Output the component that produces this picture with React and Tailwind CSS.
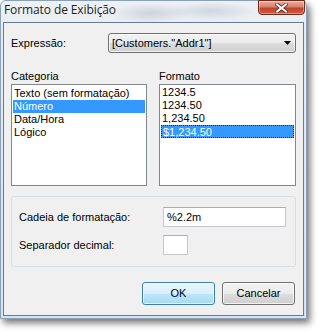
import React from "react";

// ── Windows 7 style "Formato de Exibição" dialog ─────────────────────────────

function ListBox({ items, selected, focused, padTop }) {
  return (
    <div
      className={`h-[102px] border border-[#828790] bg-white px-[1px] ${padTop}`}
    >
      {items.map((it) => {
        const isSel = it === selected;
        return (
          <div
            key={it}
            className={`h-[13px] leading-[13px] pl-[1px] whitespace-nowrap ${
              isSel
                ? `bg-[#3399ff] text-white ${
                    focused ? "border border-dotted border-[#2a2a2a] leading-[11px] pl-0" : ""
                  }`
                : ""
            }`}
          >
            {it}
          </div>
        );
      })}
    </div>
  );
}

function TextBox({ value, className }) {
  return (
    <div
      className={`h-[20px] border border-[#c4c8ce] border-t-[#abadb3] bg-white pl-[3px] leading-[18px] ${className}`}
    >
      {value}
    </div>
  );
}

function Button({ children, primary }) {
  const cls = primary
    ? "border-[#3c7fb1] bg-[linear-gradient(#eaf6fd_0%,#d9f0fc_50%,#bee6fd_51%,#a7d9f5_100%)] shadow-[inset_0_0_0_1px_rgba(255,255,255,0.7)]"
    : "border-[#707070] bg-[linear-gradient(#f2f2f2_0%,#ebebeb_50%,#dddddd_51%,#cfcfcf_100%)] shadow-[inset_0_0_0_1px_rgba(255,255,255,0.7)]";
  return (
    <div
      className={`w-[73px] h-[23px] rounded-[3px] border flex items-center justify-center ${cls}`}
    >
      {children}
    </div>
  );
}

export default function App() {
  return (
    <div className="w-[319px] h-[331px] bg-white font-['Liberation_Sans',Arial,sans-serif] text-[11px] text-black overflow-hidden">
      {/* Window */}
      <div className="w-[307px] h-[319px] flex flex-col rounded-t-[6px] border border-[#8aa0b8] bg-[linear-gradient(180deg,#eef1f4_0%,#e6ecf3_10%,#d6e4f2_100%)] shadow-[3px_4px_7px_rgba(0,0,0,0.55)]">
        {/* Title bar */}
        <div className="h-[21px] flex items-start relative bg-[radial-gradient(ellipse_40px_10px_at_150px_12px,rgba(150,160,175,0.35),transparent),radial-gradient(ellipse_45px_9px_at_210px_10px,rgba(150,165,190,0.35),transparent)]">
          <div className="pl-[3px] pt-[2px] text-[12px] leading-[14px] text-[#1e1e1e] font-['Open_Sans','Liberation_Sans',sans-serif] tracking-[-0.1px]">
            Formato de Exibição
          </div>
          <div className="ml-auto mr-[1px] -mt-[1px] w-[47px] h-[15px] rounded-b-[4px] border border-[#6f2a1f] bg-[linear-gradient(180deg,#eab0a2_0%,#d9826d_45%,#c2422b_55%,#cf5c42_100%)] shadow-[inset_0_0_0_1px_rgba(255,255,255,0.35)] flex items-center justify-center">
            <svg width="13" height="10" viewBox="0 0 13 10">
              <path
                d="M2 1.5 L11 8.5 M11 1.5 L2 8.5"
                stroke="#5a2a22"
                strokeWidth="3.6"
                strokeLinecap="square"
              />
              <path
                d="M2 1.5 L11 8.5 M11 1.5 L2 8.5"
                stroke="#ffffff"
                strokeWidth="2"
                strokeLinecap="square"
              />
            </svg>
          </div>
        </div>

        {/* Client area */}
        <div className="mx-[2px] h-[294px] border border-[#6b7b8c] bg-[#f0f0f0] px-[7px] pt-[10px] flex flex-col">
          {/* Expressão */}
          <div className="flex items-center h-[20px]">
            <div className="w-[97px]">Expressão:</div>
            <div className="w-[188px] h-[20px] rounded-[3px] border border-[#707070] bg-[linear-gradient(#f2f2f2_0%,#ebebeb_50%,#dddddd_51%,#cfcfcf_100%)] shadow-[inset_0_0_0_1px_rgba(255,255,255,0.7)] flex items-center pl-[3px] pr-[4px]">
              <span>[Customers."Addr1"]</span>
              <svg className="ml-auto" width="7" height="4" viewBox="0 0 7 4">
                <path d="M0 0 H7 L3.5 4 Z" fill="#000" />
              </svg>
            </div>
          </div>

          {/* Listas */}
          <div className="mt-[17px] grid grid-cols-[136px_137px] gap-x-[12px]">
            <div className="h-[13px] leading-[13px] mb-[1px]">Categoria</div>
            <div className="h-[13px] leading-[13px] mb-[1px]">Formato</div>
            <ListBox
              items={["Texto (sem formatação)", "Número", "Data/Hora", "Lógico"]}
              selected="Número"
              padTop="pt-[2px]"
            />
            <ListBox
              items={["1234.5", "1234.50", "1,234.50", "$1,234.50"]}
              selected="$1,234.50"
              focused
              padTop="pt-[1px]"
            />
          </div>

          {/* Grupo de formatação */}
          <div className="mt-[10px] w-[285px] h-[71px] rounded-[3px] border border-[#d5dfe5] pl-[7px] pt-[10px]">
            <div className="flex items-center">
              <div className="w-[144px]">Cadeia de formatação:</div>
              <TextBox value="%2.2m" className="w-[123px]" />
            </div>
            <div className="flex items-center mt-[8px]">
              <div className="w-[144px]">Separador decimal:</div>
              <TextBox value="" className="w-[25px]" />
            </div>
          </div>

          {/* Botões */}
          <div className="mt-[15px] flex justify-end gap-[7px] pr-[1px]">
            <Button primary>OK</Button>
            <Button>Cancelar</Button>
          </div>
        </div>
      </div>
    </div>
  );
}
